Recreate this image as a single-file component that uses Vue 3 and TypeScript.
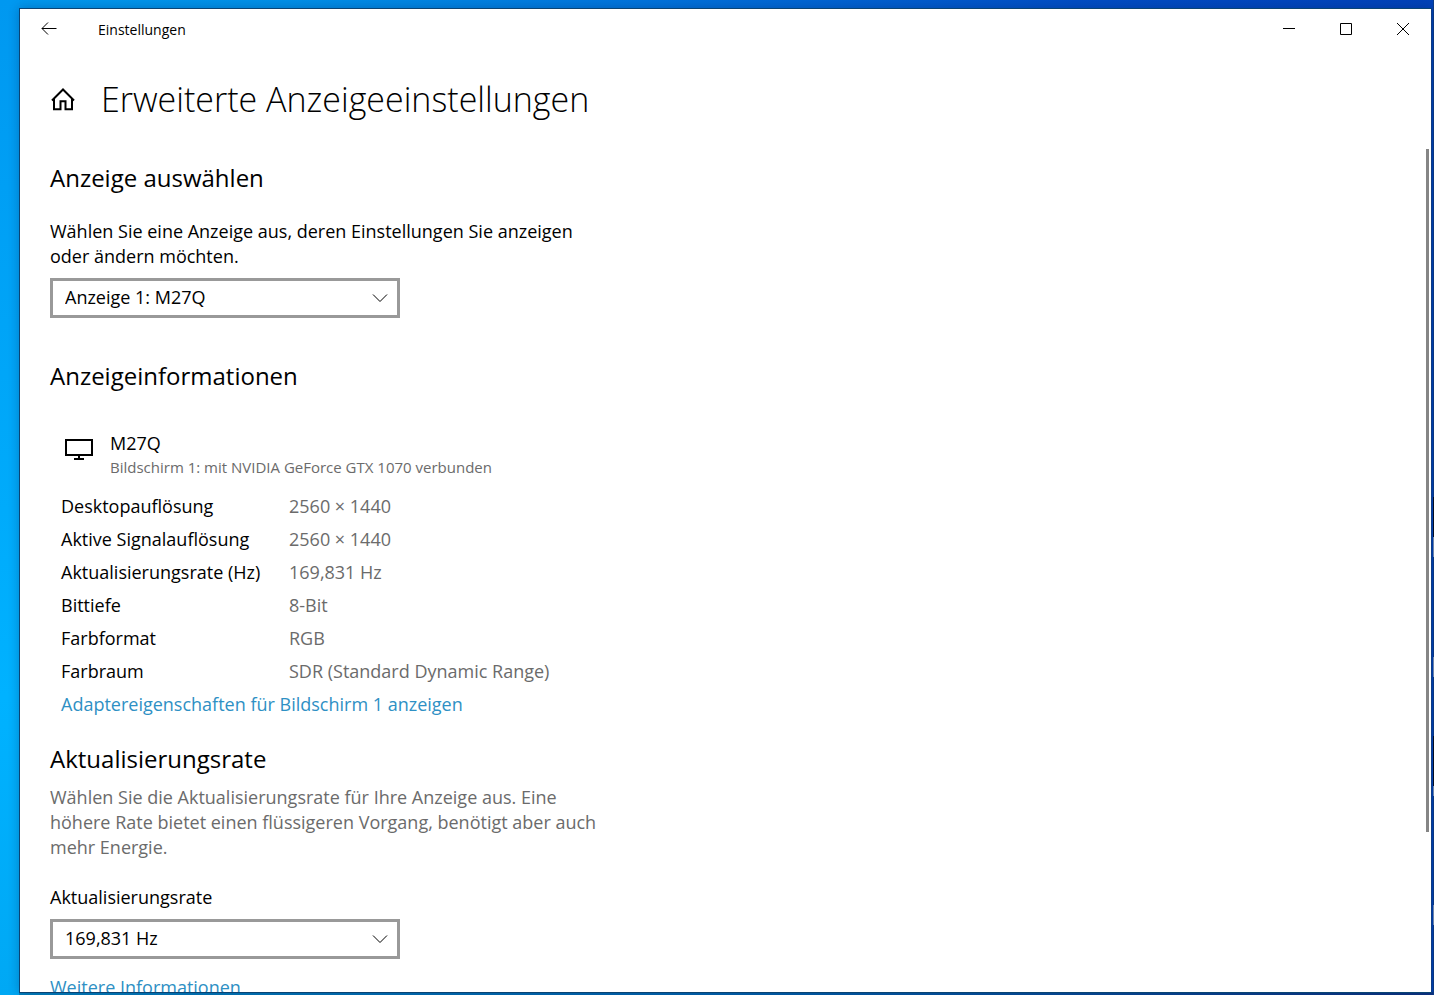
<script setup lang="ts">
import { ref } from 'vue'

interface Detail {
  label: string
  value: string
}

const display = ref('Anzeige 1: M27Q')
const rate = ref('169,831 Hz')

const details: Detail[] = [
  { label: 'Desktopauflösung', value: '2560 × 1440' },
  { label: 'Aktive Signalauflösung', value: '2560 × 1440' },
  { label: 'Aktualisierungsrate (Hz)', value: '169,831 Hz' },
  { label: 'Bittiefe', value: '8-Bit' },
  { label: 'Farbformat', value: 'RGB' },
  { label: 'Farbraum', value: 'SDR (Standard Dynamic Range)' },
]
</script>

<template>
  <div class="desktop">
    <div class="window">
      <header class="titlebar">
        <button class="back" type="button" aria-label="Zurück">
          <svg width="16" height="14" viewBox="0 0 16 14"><path d="M15.500 6.500H1M7 .5L1 6.500l6 6" /></svg>
        </button>
        <span class="app-name">Einstellungen</span>
        <div class="controls">
          <button type="button" aria-label="Minimieren">
            <svg width="12" height="12" viewBox="0 0 12 12"><path d="M0 5.500h12" /></svg>
          </button>
          <button type="button" aria-label="Maximieren">
            <svg width="12" height="12" viewBox="0 0 12 12"><path d="M.5 .5h11v11H.5z" /></svg>
          </button>
          <button type="button" aria-label="Schließen">
            <svg width="12" height="12" viewBox="0 0 12 12"><path d="M0 0l12 12M12 0L0 12" /></svg>
          </button>
        </div>
      </header>

      <div class="page-head">
        <button class="home" type="button" aria-label="Startseite">
          <svg width="24" height="24" viewBox="0 0 24 24">
            <path d="M1 13.500L12 2.500l11 11M3 12V22.200h6.500v-8h5v8H21V12" />
          </svg>
        </button>
        <h1>Erweiterte Anzeigeeinstellungen</h1>
      </div>

      <main class="scroller">
        <div class="content">
          <section>
            <h2>Anzeige auswählen</h2>
            <label class="intro" for="display">Wählen Sie eine Anzeige aus, deren Einstellungen Sie anzeigen oder ändern möchten.</label>
            <div class="combo">
              <select id="display" v-model="display">
                <option>Anzeige 1: M27Q</option>
              </select>
              <svg width="16" height="10" viewBox="0 0 16 10"><path d="M1 1.500l7 7 7-7" /></svg>
            </div>
          </section>

          <section class="info">
            <h2>Anzeigeinformationen</h2>
            <div class="device">
              <svg width="30" height="24" viewBox="0 0 30 24">
                <path d="M2 3h26v15H2zM15 18v4M10 22h10" />
              </svg>
              <div>
                <div class="device-name">M27Q</div>
                <div class="device-sub">Bildschirm 1: mit NVIDIA GeForce GTX 1070 verbunden</div>
              </div>
            </div>
            <table>
              <tbody>
                <tr v-for="item in details" :key="item.label">
                  <th scope="row">{{ item.label }}</th>
                  <td>{{ item.value }}</td>
                </tr>
              </tbody>
            </table>
            <a class="adapter" href="#">Adaptereigenschaften für Bildschirm 1 anzeigen</a>
          </section>

          <section class="rate">
            <h2>Aktualisierungsrate</h2>
            <p>Wählen Sie die Aktualisierungsrate für Ihre Anzeige aus. Eine höhere Rate bietet einen flüssigeren Vorgang, benötigt aber auch mehr Energie.</p>
            <label for="rate">Aktualisierungsrate</label>
            <div class="combo">
              <select id="rate" v-model="rate">
                <option>169,831 Hz</option>
              </select>
              <svg width="16" height="10" viewBox="0 0 16 10"><path d="M1 1.500l7 7 7-7" /></svg>
            </div>
            <a class="more" href="#">Weitere Informationen</a>
          </section>
        </div>
        <div class="track"><div class="thumb"></div></div>
      </main>
    </div>
  </div>
</template>

<style>
body {
  margin: 0;
}
</style>

<style scoped>
* {
  box-sizing: border-box;
}

.desktop {
  height: 100vh;
  padding: 8px 2px 2px 19px;
  overflow: hidden;
  background:
    linear-gradient(#0098f0, #00b2ff 70%, #00a8f4) left / 19px 100% no-repeat,
    linear-gradient(#0c3c86 50%, #050d1c 50%, #050d1c 54%, #7d94b4 54%, #7d94b4 56%, #0c3c86 56%, #0c3c86 66%, #7d94b4 66%, #7d94b4 68%, #0c3c86 68%, #0c3c86 74%, #050d1c 74%, #050d1c 79%, #7d94b4 79%, #7d94b4 80%, #0c3c86 80%, #0c3c86 91%, #7d94b4 91%, #7d94b4 93%, #0c3c86 93%) right / 1px 100% no-repeat,
    linear-gradient(90deg, #0080be, #0063ae 50%, #0c3280) bottom / 100% 3px no-repeat,
    linear-gradient(90deg, #0098ee 0, #0090e8 20%, #0074dc 45%, #004ec4 75%, #0042b8 100%);
  font-family: "Open Sans", "Noto Sans", sans-serif;
  font-size: 18px;
  line-height: 25px;
  color: #000;
}

.window {
  display: flex;
  flex-direction: column;
  height: 100%;
  border: 1px solid #0a4474;
  border-right-color: #0c3c86;
  background: #fff;
  box-shadow: 0 0 10px rgba(0, 30, 80, 0.3);
}

button {
  display: flex;
  align-items: center;
  justify-content: center;
  padding: 0;
  border: 0;
  background: none;
}

svg {
  display: block;
  fill: none;
  stroke: #000;
}

.titlebar {
  display: flex;
  align-items: center;
  height: 40px;
  flex: none;
}

.back {
  width: 58px;
  height: 40px;
}

.app-name {
  padding: 2px 0 0 20px;
  font-size: 14px;
  line-height: 20px;
}

.controls {
  display: flex;
  margin-left: auto;
}

.controls button {
  width: 57px;
  height: 40px;
}

.page-head {
  display: flex;
  align-items: center;
  gap: 26px;
  padding: 26px 30px 26px 31px;
  flex: none;
}

.home svg {
  stroke-width: 2;
}

h1 {
  margin: 0;
  font-size: 34px;
  font-weight: 300;
  line-height: 48px;
}

.scroller {
  display: flex;
  flex: 1;
  min-height: 0;
  overflow: hidden;
}

.content {
  flex: 1;
  padding: 13px 30px 0;
}

section {
  max-width: 550px;
}

h2 {
  margin: 0;
  font-size: 24px;
  font-weight: 400;
  line-height: 32px;
}

label {
  display: block;
}

.intro {
  margin: 25px 0 9px;
}

.combo {
  display: grid;
  align-items: center;
  max-width: 350px;
}

.combo select,
.combo svg {
  grid-area: 1 / 1;
}

.combo select {
  width: 100%;
  height: 40px;
  padding: 0 40px 2px 12px;
  border: 3px solid #999;
  border-radius: 0;
  background: #fff;
  color: #000;
  font: inherit;
  appearance: none;
}

.combo svg {
  justify-self: end;
  margin-right: 12px;
  pointer-events: none;
}

.info {
  margin-top: 42px;
}

.device {
  display: flex;
  gap: 16px;
  padding: 39px 0 12px 14px;
}

.device svg {
  margin-top: 6px;
  stroke-width: 2;
}

.device-sub {
  font-size: 15px;
  line-height: 22px;
  color: #6b6b6b;
}

table {
  margin-left: 11px;
  border-collapse: collapse;
}

th,
td {
  height: 33px;
  padding: 0;
  font-weight: 400;
  text-align: left;
}

th {
  width: 228px;
}

td,
.rate p {
  color: #6b6b6b;
}

a {
  display: block;
  color: #2e90c4;
  text-decoration: none;
}

.adapter {
  margin-left: 11px;
  line-height: 33px;
}

.rate {
  margin-top: 22px;
}

.rate p {
  margin: 10px 0 25px;
}

.rate .combo {
  margin: 9px 0 16px;
}

.track {
  width: 5px;
  padding-right: 2px;
}

.thumb {
  height: 81%;
  background: #858585;
}
</style>
